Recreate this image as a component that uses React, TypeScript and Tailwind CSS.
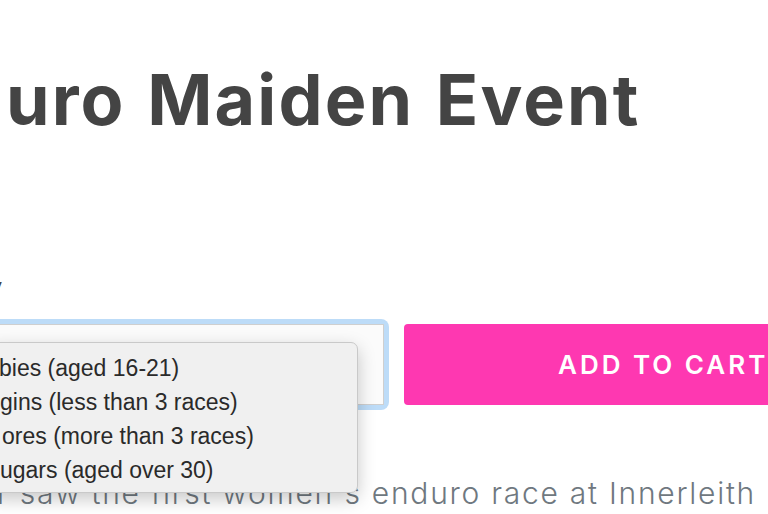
export default function App() {
  const opts = [
    { t: "bies (aged 16-21)", ml: "ml-[-2px]" },
    { t: "gins (less than 3 races)", ml: "ml-[-1px]" },
    { t: "ores (more than 3 races)", ml: "ml-[1px]" },
    { t: "ugars (aged over 30)", ml: "ml-[-1px]" },
  ];
  return (
    <div className="relative w-[768px] h-[514px] overflow-hidden bg-white [font-family:Inter,sans-serif]">
      <div className="flex flex-col">
        <h1 className="mt-[65px] ml-[6px] whitespace-nowrap text-[70px] font-bold leading-none tracking-[0.03em] [word-spacing:3px] text-[#444444]">
          uro Maiden Event
        </h1>
        <div className="mt-[141px] ml-[-9px] text-[20px] leading-none text-[#444444]">y</div>
        <div className="mt-[23px] flex items-start">
          <div className="ml-[-20px] w-[409px] shrink-0 rounded-[8px] bg-[#bddcf8] p-[5px]">
            <div className="relative h-[81px] border border-[#cfcfcf] bg-[#fbfbfb]">
              <svg className="absolute left-[348px] top-[33px]" width="14" height="10" viewBox="0 0 14 10">
                <path d="M2 2l5 5 5-5" fill="none" stroke="#e8883a" strokeWidth="2" />
              </svg>
            </div>
          </div>
          <button className="ml-[15px] mt-[5px] h-[81px] w-[520px] shrink-0 rounded-[4px] bg-[#fe38b1] pl-[154px] text-left text-[26px] font-semibold tracking-[0.115em] text-white">
            ADD TO CART
          </button>
        </div>
        <div className="mt-[68px] ml-[-3px] whitespace-nowrap text-[30px] font-light leading-none tracking-[0.058em] text-[#6f7880]">
          r saw the first women's enduro race at Innerleith
        </div>
      </div>
      <div className="absolute left-[-12px] top-[342px] h-[151px] w-[370px] rounded-[7px] border border-[#c9c9c9] bg-[#f0f0f0] pt-[8px] shadow-[0_6px_18px_rgba(0,0,0,0.22)]">
        {opts.map((o) => (
          <div key={o.t} className="flex h-[34px] items-center pl-[12px]">
            <span className={`${o.ml} whitespace-nowrap text-[23px] leading-none text-[#2a2a2a] [font-family:'Liberation_Sans',Arial,sans-serif]`}>
              {o.t}
            </span>
          </div>
        ))}
      </div>
    </div>
  );
}
